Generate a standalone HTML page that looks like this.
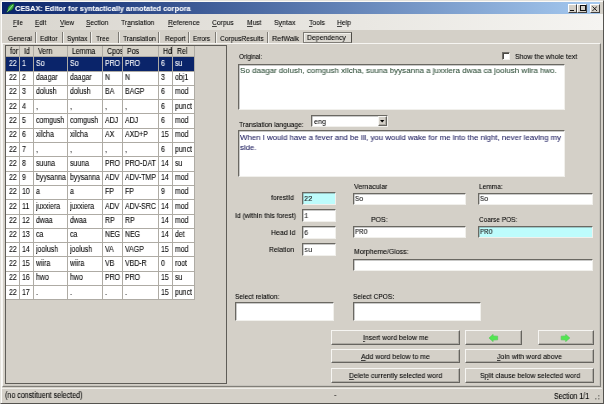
<!DOCTYPE html>
<html><head><meta charset="utf-8"><title>CESAX: Editor for syntactically annotated corpora</title>
<style>
html,body{margin:0;padding:0;}
body{width:604px;height:404px;overflow:hidden;background:#d4d0c8;position:relative;font-family:"Liberation Sans",sans-serif;font-size:7.3px;color:#000;}
div,span{position:absolute;box-sizing:border-box;white-space:nowrap;}
.t{transform-origin:0 50%;will-change:transform;-webkit-text-stroke:0.08px;}
.tb{background:#fff;border-top:1px solid #6a6862;border-left:1px solid #6a6862;box-shadow:inset 0.5px 0.5px 0 rgba(60,58,54,.55);border-bottom:1px solid #f1f0ec;border-right:1px solid #f1f0ec;}
.mono{font-family:"Liberation Mono",monospace;}
.btn{background:#d4d0c8;border-top:1px solid #f6f5f2;border-left:1px solid #f6f5f2;border-right:1px solid #66645f;border-bottom:1px solid #66645f;box-shadow:inset -1px -1px 0 #aeaba4;}
.cell{line-height:14px;height:14px;overflow:hidden;transform-origin:0 50%;transform:scaleX(.85);font-size:8.2px;will-change:transform;-webkit-text-stroke:0.08px;}
u{text-decoration:underline;text-decoration-thickness:0.6px;text-underline-offset:0.5px;text-decoration-color:rgba(0,0,0,.7);}
</style></head><body>

<div style="left:0;top:0;width:604px;height:404px;border:1px solid #e4e2dc;border-right-color:#55534f;border-bottom:1.6px solid #55534f;box-shadow:inset 1px 1px 0 #fbfaf8;"></div>
<div style="left:2.3px;top:2.3px;width:598px;height:11.3px;background:linear-gradient(90deg,#0a246a 0%,#a6caf0 100%);"></div>
<svg style="position:absolute;left:5px;top:3px" width="10" height="11" viewBox="0 0 10 11"><path d="M1.5 9.6 L3 7.2 C2.2 4.6 4.6 1.4 9 0.6 C9.8 3.8 7.8 7.4 4.2 8 Z" fill="#35a83c" stroke="#14501c" stroke-width="0.5"/><path d="M2.4 8.6 L7.8 2.2" stroke="#a8eca0" stroke-width="0.9" fill="none"/></svg>
<div style="left:567.6px;top:4px;width:9.8px;height:8.6px;background:#d4d0c8;border-top:1px solid #fff;border-left:1px solid #fff;border-right:1px solid #404040;border-bottom:1px solid #404040;"></div>
<div style="left:577.4px;top:4px;width:9.8px;height:8.6px;background:#d4d0c8;border-top:1px solid #fff;border-left:1px solid #fff;border-right:1px solid #404040;border-bottom:1px solid #404040;"></div>
<div style="left:589.8px;top:4px;width:9.8px;height:8.6px;background:#d4d0c8;border-top:1px solid #fff;border-left:1px solid #fff;border-right:1px solid #404040;border-bottom:1px solid #404040;"></div>
<div style="left:570px;top:10px;width:4px;height:1.1px;background:#111"></div>
<div style="left:579.6px;top:5.4px;width:6px;height:5.6px;border:0.8px solid #111;border-top-width:1.4px"></div>
<svg style="position:absolute;left:592px;top:5.6px" width="5.4" height="5.4" viewBox="0 0 6 6"><path d="M0.5 0.5 L5.5 5.5 M5.5 0.5 L0.5 5.5" stroke="#111" stroke-width="1.05"/></svg>
<div style="left:2px;top:13.6px;width:601px;height:16.6px;background:linear-gradient(90deg,#d9d6cf 0%,#e9e7e2 60%,#f5f4f1 100%);"></div>
<div style="left:2px;top:43px;width:599.4px;height:344px;border-top:1px solid #f6f5f2;border-left:1px solid #f6f5f2;border-right:1px solid #807e78;border-bottom:1px solid #807e78;box-shadow:inset -1px -1px 0 #c6c3bc;"></div>
<div style="left:34.699999999999996px;top:32px;width:1px;height:11.3px;background:#7d7a74"></div><div style="left:35.699999999999996px;top:32px;width:1px;height:11.3px;background:#f1f0ec"></div>
<div style="left:62.099999999999994px;top:32px;width:1px;height:11.3px;background:#7d7a74"></div><div style="left:63.099999999999994px;top:32px;width:1px;height:11.3px;background:#f1f0ec"></div>
<div style="left:90.3px;top:32px;width:1px;height:11.3px;background:#7d7a74"></div><div style="left:91.3px;top:32px;width:1px;height:11.3px;background:#f1f0ec"></div>
<div style="left:117.5px;top:32px;width:1px;height:11.3px;background:#7d7a74"></div><div style="left:118.5px;top:32px;width:1px;height:11.3px;background:#f1f0ec"></div>
<div style="left:158.3px;top:32px;width:1px;height:11.3px;background:#7d7a74"></div><div style="left:159.3px;top:32px;width:1px;height:11.3px;background:#f1f0ec"></div>
<div style="left:187.8px;top:32px;width:1px;height:11.3px;background:#7d7a74"></div><div style="left:188.8px;top:32px;width:1px;height:11.3px;background:#f1f0ec"></div>
<div style="left:214.60000000000002px;top:32px;width:1px;height:11.3px;background:#7d7a74"></div><div style="left:215.60000000000002px;top:32px;width:1px;height:11.3px;background:#f1f0ec"></div>
<div style="left:267.1px;top:32px;width:1px;height:11.3px;background:#7d7a74"></div><div style="left:268.1px;top:32px;width:1px;height:11.3px;background:#f1f0ec"></div>
<div style="left:303px;top:32px;width:48.5px;height:10.5px;background:#dcd9d2;border-top:1px solid #7c7a74;border-left:1px solid #7c7a74;border-right:1.4px solid #4e4c47;border-bottom:1px solid #807d77;box-shadow:inset 1px 1px 0 #f1f0ec;"></div>
<div style="left:5px;top:45px;width:221.7px;height:339.3px;border:1px solid #5f5d58;"></div>
<div style="left:6px;top:46px;width:188.80px;height:253.80px;background:#fff;"></div>
<div style="left:6px;top:46px;width:188.80px;height:10.70px;background:#d6d2c8;"></div>
<div style="left:6px;top:56.7px;width:188.80px;height:14.3px;background:#0a246a;"></div>
<div style="left:6px;top:56.20px;width:188.80px;height:1px;background:#aeaba4;"></div>
<div style="left:6px;top:70.50px;width:188.80px;height:1px;background:#aeaba4;"></div>
<div style="left:6px;top:84.80px;width:188.80px;height:1px;background:#aeaba4;"></div>
<div style="left:6px;top:99.10px;width:188.80px;height:1px;background:#aeaba4;"></div>
<div style="left:6px;top:113.40px;width:188.80px;height:1px;background:#aeaba4;"></div>
<div style="left:6px;top:127.70px;width:188.80px;height:1px;background:#aeaba4;"></div>
<div style="left:6px;top:142.00px;width:188.80px;height:1px;background:#aeaba4;"></div>
<div style="left:6px;top:156.30px;width:188.80px;height:1px;background:#aeaba4;"></div>
<div style="left:6px;top:170.60px;width:188.80px;height:1px;background:#aeaba4;"></div>
<div style="left:6px;top:184.90px;width:188.80px;height:1px;background:#aeaba4;"></div>
<div style="left:6px;top:199.20px;width:188.80px;height:1px;background:#aeaba4;"></div>
<div style="left:6px;top:213.50px;width:188.80px;height:1px;background:#aeaba4;"></div>
<div style="left:6px;top:227.80px;width:188.80px;height:1px;background:#aeaba4;"></div>
<div style="left:6px;top:242.10px;width:188.80px;height:1px;background:#aeaba4;"></div>
<div style="left:6px;top:256.40px;width:188.80px;height:1px;background:#aeaba4;"></div>
<div style="left:6px;top:270.70px;width:188.80px;height:1px;background:#aeaba4;"></div>
<div style="left:6px;top:285.00px;width:188.80px;height:1px;background:#aeaba4;"></div>
<div style="left:6px;top:299.30px;width:188.80px;height:1px;background:#aeaba4;"></div>
<div style="left:18.80px;top:46px;width:1px;height:253.80px;background:#aeaba4;"></div>
<div style="left:32.80px;top:46px;width:1px;height:253.80px;background:#aeaba4;"></div>
<div style="left:67.00px;top:46px;width:1px;height:253.80px;background:#aeaba4;"></div>
<div style="left:101.90px;top:46px;width:1px;height:253.80px;background:#aeaba4;"></div>
<div style="left:122.10px;top:46px;width:1px;height:253.80px;background:#aeaba4;"></div>
<div style="left:158.10px;top:46px;width:1px;height:253.80px;background:#aeaba4;"></div>
<div style="left:171.80px;top:46px;width:1px;height:253.80px;background:#aeaba4;"></div>
<div style="left:194.30px;top:46px;width:1px;height:253.80px;background:#aeaba4;"></div>
<div class="cell" style="left:10.30px;top:46.4px;width:9.65px;height:11px;line-height:11px;">for</div>
<div class="cell" style="left:23.60px;top:46.4px;width:10.47px;height:11px;line-height:11px;">Id</div>
<div class="cell" style="left:37.60px;top:46.4px;width:34.24px;height:11px;line-height:11px;">Vern</div>
<div class="cell" style="left:71.80px;top:46.4px;width:35.06px;height:11px;line-height:11px;">Lemma</div>
<div class="cell" style="left:106.70px;top:46.4px;width:17.76px;height:11px;line-height:11px;">Cpos</div>
<div class="cell" style="left:126.90px;top:46.4px;width:36.35px;height:11px;line-height:11px;">Pos</div>
<div class="cell" style="left:162.90px;top:46.4px;width:10.12px;height:11px;line-height:11px;">Hd</div>
<div class="cell" style="left:176.60px;top:46.4px;width:20.47px;height:11px;line-height:11px;">Rel</div>
<div class="cell" style="left:8.50px;top:56.70px;width:12.71px;color:#fff;">22</div>
<div class="cell" style="left:21.80px;top:56.70px;width:13.53px;color:#fff;">1</div>
<div class="cell" style="left:35.80px;top:56.70px;width:37.29px;color:#fff;">So</div>
<div class="cell" style="left:70.00px;top:56.70px;width:38.12px;color:#fff;">So</div>
<div class="cell" style="left:104.90px;top:56.70px;width:20.82px;color:#fff;">PRO</div>
<div class="cell" style="left:125.10px;top:56.70px;width:39.41px;color:#fff;">PRO</div>
<div class="cell" style="left:161.10px;top:56.70px;width:13.18px;color:#fff;">6</div>
<div class="cell" style="left:174.80px;top:56.70px;width:23.53px;color:#fff;">su</div>
<div class="cell" style="left:8.50px;top:71.00px;width:12.71px;color:#000;">22</div>
<div class="cell" style="left:21.80px;top:71.00px;width:13.53px;color:#000;">2</div>
<div class="cell" style="left:35.80px;top:71.00px;width:37.29px;color:#000;">daagar</div>
<div class="cell" style="left:70.00px;top:71.00px;width:38.12px;color:#000;">daagar</div>
<div class="cell" style="left:104.90px;top:71.00px;width:20.82px;color:#000;">N</div>
<div class="cell" style="left:125.10px;top:71.00px;width:39.41px;color:#000;">N</div>
<div class="cell" style="left:161.10px;top:71.00px;width:13.18px;color:#000;">3</div>
<div class="cell" style="left:174.80px;top:71.00px;width:23.53px;color:#000;">obj1</div>
<div class="cell" style="left:8.50px;top:85.30px;width:12.71px;color:#000;">22</div>
<div class="cell" style="left:21.80px;top:85.30px;width:13.53px;color:#000;">3</div>
<div class="cell" style="left:35.80px;top:85.30px;width:37.29px;color:#000;">dolush</div>
<div class="cell" style="left:70.00px;top:85.30px;width:38.12px;color:#000;">dolush</div>
<div class="cell" style="left:104.90px;top:85.30px;width:20.82px;color:#000;">BA</div>
<div class="cell" style="left:125.10px;top:85.30px;width:39.41px;color:#000;">BAGP</div>
<div class="cell" style="left:161.10px;top:85.30px;width:13.18px;color:#000;">6</div>
<div class="cell" style="left:174.80px;top:85.30px;width:23.53px;color:#000;">mod</div>
<div class="cell" style="left:8.50px;top:99.60px;width:12.71px;color:#000;">22</div>
<div class="cell" style="left:21.80px;top:99.60px;width:13.53px;color:#000;">4</div>
<div class="cell" style="left:35.80px;top:99.60px;width:37.29px;color:#000;">,</div>
<div class="cell" style="left:70.00px;top:99.60px;width:38.12px;color:#000;">,</div>
<div class="cell" style="left:104.90px;top:99.60px;width:20.82px;color:#000;">,</div>
<div class="cell" style="left:125.10px;top:99.60px;width:39.41px;color:#000;">,</div>
<div class="cell" style="left:161.10px;top:99.60px;width:13.18px;color:#000;">6</div>
<div class="cell" style="left:174.80px;top:99.60px;width:23.53px;color:#000;">punct</div>
<div class="cell" style="left:8.50px;top:113.90px;width:12.71px;color:#000;">22</div>
<div class="cell" style="left:21.80px;top:113.90px;width:13.53px;color:#000;">5</div>
<div class="cell" style="left:35.80px;top:113.90px;width:37.29px;color:#000;">comgush</div>
<div class="cell" style="left:70.00px;top:113.90px;width:38.12px;color:#000;">comgush</div>
<div class="cell" style="left:104.90px;top:113.90px;width:20.82px;color:#000;">ADJ</div>
<div class="cell" style="left:125.10px;top:113.90px;width:39.41px;color:#000;">ADJ</div>
<div class="cell" style="left:161.10px;top:113.90px;width:13.18px;color:#000;">6</div>
<div class="cell" style="left:174.80px;top:113.90px;width:23.53px;color:#000;">mod</div>
<div class="cell" style="left:8.50px;top:128.20px;width:12.71px;color:#000;">22</div>
<div class="cell" style="left:21.80px;top:128.20px;width:13.53px;color:#000;">6</div>
<div class="cell" style="left:35.80px;top:128.20px;width:37.29px;color:#000;">xilcha</div>
<div class="cell" style="left:70.00px;top:128.20px;width:38.12px;color:#000;">xilcha</div>
<div class="cell" style="left:104.90px;top:128.20px;width:20.82px;color:#000;">AX</div>
<div class="cell" style="left:125.10px;top:128.20px;width:39.41px;color:#000;">AXD+P</div>
<div class="cell" style="left:161.10px;top:128.20px;width:13.18px;color:#000;">15</div>
<div class="cell" style="left:174.80px;top:128.20px;width:23.53px;color:#000;">mod</div>
<div class="cell" style="left:8.50px;top:142.50px;width:12.71px;color:#000;">22</div>
<div class="cell" style="left:21.80px;top:142.50px;width:13.53px;color:#000;">7</div>
<div class="cell" style="left:35.80px;top:142.50px;width:37.29px;color:#000;">,</div>
<div class="cell" style="left:70.00px;top:142.50px;width:38.12px;color:#000;">,</div>
<div class="cell" style="left:104.90px;top:142.50px;width:20.82px;color:#000;">,</div>
<div class="cell" style="left:125.10px;top:142.50px;width:39.41px;color:#000;">,</div>
<div class="cell" style="left:161.10px;top:142.50px;width:13.18px;color:#000;">6</div>
<div class="cell" style="left:174.80px;top:142.50px;width:23.53px;color:#000;">punct</div>
<div class="cell" style="left:8.50px;top:156.80px;width:12.71px;color:#000;">22</div>
<div class="cell" style="left:21.80px;top:156.80px;width:13.53px;color:#000;">8</div>
<div class="cell" style="left:35.80px;top:156.80px;width:37.29px;color:#000;">suuna</div>
<div class="cell" style="left:70.00px;top:156.80px;width:38.12px;color:#000;">suuna</div>
<div class="cell" style="left:104.90px;top:156.80px;width:20.82px;color:#000;">PRO</div>
<div class="cell" style="left:125.10px;top:156.80px;width:39.41px;color:#000;">PRO-DAT</div>
<div class="cell" style="left:161.10px;top:156.80px;width:13.18px;color:#000;">14</div>
<div class="cell" style="left:174.80px;top:156.80px;width:23.53px;color:#000;">su</div>
<div class="cell" style="left:8.50px;top:171.10px;width:12.71px;color:#000;">22</div>
<div class="cell" style="left:21.80px;top:171.10px;width:13.53px;color:#000;">9</div>
<div class="cell" style="left:35.80px;top:171.10px;width:37.29px;color:#000;">byysanna</div>
<div class="cell" style="left:70.00px;top:171.10px;width:38.12px;color:#000;">byysanna</div>
<div class="cell" style="left:104.90px;top:171.10px;width:20.82px;color:#000;">ADV</div>
<div class="cell" style="left:125.10px;top:171.10px;width:39.41px;color:#000;">ADV-TMP</div>
<div class="cell" style="left:161.10px;top:171.10px;width:13.18px;color:#000;">14</div>
<div class="cell" style="left:174.80px;top:171.10px;width:23.53px;color:#000;">mod</div>
<div class="cell" style="left:8.50px;top:185.40px;width:12.71px;color:#000;">22</div>
<div class="cell" style="left:21.80px;top:185.40px;width:13.53px;color:#000;">10</div>
<div class="cell" style="left:35.80px;top:185.40px;width:37.29px;color:#000;">a</div>
<div class="cell" style="left:70.00px;top:185.40px;width:38.12px;color:#000;">a</div>
<div class="cell" style="left:104.90px;top:185.40px;width:20.82px;color:#000;">FP</div>
<div class="cell" style="left:125.10px;top:185.40px;width:39.41px;color:#000;">FP</div>
<div class="cell" style="left:161.10px;top:185.40px;width:13.18px;color:#000;">9</div>
<div class="cell" style="left:174.80px;top:185.40px;width:23.53px;color:#000;">mod</div>
<div class="cell" style="left:8.50px;top:199.70px;width:12.71px;color:#000;">22</div>
<div class="cell" style="left:21.80px;top:199.70px;width:13.53px;color:#000;">11</div>
<div class="cell" style="left:35.80px;top:199.70px;width:37.29px;color:#000;">juxxiera</div>
<div class="cell" style="left:70.00px;top:199.70px;width:38.12px;color:#000;">juxxiera</div>
<div class="cell" style="left:104.90px;top:199.70px;width:20.82px;color:#000;">ADV</div>
<div class="cell" style="left:125.10px;top:199.70px;width:39.41px;color:#000;">ADV-SRC</div>
<div class="cell" style="left:161.10px;top:199.70px;width:13.18px;color:#000;">14</div>
<div class="cell" style="left:174.80px;top:199.70px;width:23.53px;color:#000;">mod</div>
<div class="cell" style="left:8.50px;top:214.00px;width:12.71px;color:#000;">22</div>
<div class="cell" style="left:21.80px;top:214.00px;width:13.53px;color:#000;">12</div>
<div class="cell" style="left:35.80px;top:214.00px;width:37.29px;color:#000;">dwaa</div>
<div class="cell" style="left:70.00px;top:214.00px;width:38.12px;color:#000;">dwaa</div>
<div class="cell" style="left:104.90px;top:214.00px;width:20.82px;color:#000;">RP</div>
<div class="cell" style="left:125.10px;top:214.00px;width:39.41px;color:#000;">RP</div>
<div class="cell" style="left:161.10px;top:214.00px;width:13.18px;color:#000;">14</div>
<div class="cell" style="left:174.80px;top:214.00px;width:23.53px;color:#000;">mod</div>
<div class="cell" style="left:8.50px;top:228.30px;width:12.71px;color:#000;">22</div>
<div class="cell" style="left:21.80px;top:228.30px;width:13.53px;color:#000;">13</div>
<div class="cell" style="left:35.80px;top:228.30px;width:37.29px;color:#000;">ca</div>
<div class="cell" style="left:70.00px;top:228.30px;width:38.12px;color:#000;">ca</div>
<div class="cell" style="left:104.90px;top:228.30px;width:20.82px;color:#000;">NEG</div>
<div class="cell" style="left:125.10px;top:228.30px;width:39.41px;color:#000;">NEG</div>
<div class="cell" style="left:161.10px;top:228.30px;width:13.18px;color:#000;">14</div>
<div class="cell" style="left:174.80px;top:228.30px;width:23.53px;color:#000;">det</div>
<div class="cell" style="left:8.50px;top:242.60px;width:12.71px;color:#000;">22</div>
<div class="cell" style="left:21.80px;top:242.60px;width:13.53px;color:#000;">14</div>
<div class="cell" style="left:35.80px;top:242.60px;width:37.29px;color:#000;">joolush</div>
<div class="cell" style="left:70.00px;top:242.60px;width:38.12px;color:#000;">joolush</div>
<div class="cell" style="left:104.90px;top:242.60px;width:20.82px;color:#000;">VA</div>
<div class="cell" style="left:125.10px;top:242.60px;width:39.41px;color:#000;">VAGP</div>
<div class="cell" style="left:161.10px;top:242.60px;width:13.18px;color:#000;">15</div>
<div class="cell" style="left:174.80px;top:242.60px;width:23.53px;color:#000;">mod</div>
<div class="cell" style="left:8.50px;top:256.90px;width:12.71px;color:#000;">22</div>
<div class="cell" style="left:21.80px;top:256.90px;width:13.53px;color:#000;">15</div>
<div class="cell" style="left:35.80px;top:256.90px;width:37.29px;color:#000;">wiira</div>
<div class="cell" style="left:70.00px;top:256.90px;width:38.12px;color:#000;">wiira</div>
<div class="cell" style="left:104.90px;top:256.90px;width:20.82px;color:#000;">VB</div>
<div class="cell" style="left:125.10px;top:256.90px;width:39.41px;color:#000;">VBD-R</div>
<div class="cell" style="left:161.10px;top:256.90px;width:13.18px;color:#000;">0</div>
<div class="cell" style="left:174.80px;top:256.90px;width:23.53px;color:#000;">root</div>
<div class="cell" style="left:8.50px;top:271.20px;width:12.71px;color:#000;">22</div>
<div class="cell" style="left:21.80px;top:271.20px;width:13.53px;color:#000;">16</div>
<div class="cell" style="left:35.80px;top:271.20px;width:37.29px;color:#000;">hwo</div>
<div class="cell" style="left:70.00px;top:271.20px;width:38.12px;color:#000;">hwo</div>
<div class="cell" style="left:104.90px;top:271.20px;width:20.82px;color:#000;">PRO</div>
<div class="cell" style="left:125.10px;top:271.20px;width:39.41px;color:#000;">PRO</div>
<div class="cell" style="left:161.10px;top:271.20px;width:13.18px;color:#000;">15</div>
<div class="cell" style="left:174.80px;top:271.20px;width:23.53px;color:#000;">su</div>
<div class="cell" style="left:8.50px;top:285.50px;width:12.71px;color:#000;">22</div>
<div class="cell" style="left:21.80px;top:285.50px;width:13.53px;color:#000;">17</div>
<div class="cell" style="left:35.80px;top:285.50px;width:37.29px;color:#000;">.</div>
<div class="cell" style="left:70.00px;top:285.50px;width:38.12px;color:#000;">.</div>
<div class="cell" style="left:104.90px;top:285.50px;width:20.82px;color:#000;">.</div>
<div class="cell" style="left:125.10px;top:285.50px;width:39.41px;color:#000;">.</div>
<div class="cell" style="left:161.10px;top:285.50px;width:13.18px;color:#000;">15</div>
<div class="cell" style="left:174.80px;top:285.50px;width:23.53px;color:#000;">punct</div>
<div style="left:501.5px;top:51.5px;width:8.7px;height:8.7px;background:#fff;border:1px solid #716f69;border-right-color:#f1f0ec;border-bottom-color:#f1f0ec;box-shadow:inset 1px 1px 0 #4a4843;"></div>
<div class="tb" style="left:237.9px;top:63.8px;width:327.3px;height:46.2px;background:#fff;"></div>
<div class="tb" style="left:311px;top:115.1px;width:76.6px;height:12.3px;background:#fff;"></div>
<div class="btn" style="left:378.3px;top:116.4px;width:8.3px;height:9.7px;"></div>
<svg style="position:absolute;left:380.3px;top:120px" width="4.4" height="2.6" viewBox="0 0 5 3"><path d="M0 0 L5 0 L2.5 3 Z" fill="#000"/></svg>
<div class="tb" style="left:237.9px;top:130.4px;width:327.3px;height:46.9px;background:#fff;"></div>
<div class="tb" style="left:302.2px;top:192px;width:33.5px;height:12.8px;background:#bdfcfc;"></div>
<div class="tb" style="left:302.2px;top:209.1px;width:33.5px;height:12.7px;background:#fff;"></div>
<div class="tb" style="left:302.2px;top:226.2px;width:33.5px;height:12.6px;background:#fff;"></div>
<div class="tb" style="left:302.2px;top:243.2px;width:33.5px;height:12.6px;background:#fff;"></div>
<div class="tb" style="left:353.3px;top:192.8px;width:113.0px;height:12.4px;background:#fff;"></div>
<div class="tb" style="left:477.8px;top:192.8px;width:114.8px;height:12.4px;background:#fff;"></div>
<div class="tb" style="left:353.3px;top:225.8px;width:113.0px;height:12.6px;background:#fff;"></div>
<div class="tb" style="left:477.8px;top:225.8px;width:114.8px;height:12.6px;background:#bdfcfc;"></div>
<div class="tb" style="left:353.3px;top:258.8px;width:239.3px;height:12.6px;background:#fff;"></div>
<div class="tb" style="left:234.9px;top:302.3px;width:99.1px;height:18.3px;background:#fff;"></div>
<div class="tb" style="left:353.2px;top:302.3px;width:128.0px;height:18.3px;background:#fff;"></div>
<div class="btn" style="left:330.7px;top:329.8px;width:129.4px;height:15.0px;"></div>
<div class="btn" style="left:330.7px;top:348.5px;width:129.4px;height:14.9px;"></div>
<div class="btn" style="left:330.7px;top:367.5px;width:129.4px;height:15.3px;"></div>
<div class="btn" style="left:465.4px;top:329.8px;width:56.4px;height:15.0px;"></div>
<div class="btn" style="left:537.5px;top:329.8px;width:56.9px;height:15.0px;"></div>
<div class="btn" style="left:465.4px;top:348.5px;width:129.1px;height:14.9px;"></div>
<div class="btn" style="left:465.4px;top:367.5px;width:129.1px;height:15.3px;"></div>
<svg style="position:absolute;left:488.4px;top:333.8px;filter:blur(0.5px)" width="10.8" height="8" viewBox="0 0 11 9"><path d="M0.5 4.5 L5.2 0.4 L5.2 2.2 L10.3 2.4 L10.3 6.6 L5.2 6.8 L5.2 8.6 Z" fill="#52e652" stroke="#58c858" stroke-width="0.7" stroke-linejoin="round"/></svg>
<svg style="position:absolute;left:560px;top:333.8px;filter:blur(0.5px)" width="10.8" height="8" viewBox="0 0 11 9"><path d="M10.5 4.5 L5.8 0.4 L5.8 2.2 L0.7 2.4 L0.7 6.6 L5.8 6.8 L5.8 8.6 Z" fill="#52e652" stroke="#58c858" stroke-width="0.7" stroke-linejoin="round"/></svg>
<div style="left:2px;top:388px;width:600px;height:1px;background:#efeeea"></div>
<svg style="position:absolute;left:592px;top:392px" width="9" height="9" viewBox="0 0 9 9"><g fill="#8a8882"><rect x="6" y="6" width="1.5" height="1.5"/><rect x="3" y="6" width="1.5" height="1.5"/><rect x="6" y="3" width="1.5" height="1.5"/></g></svg>
<div class="t " id="t0" style="left:15.0px;top:3.60px;line-height:10px;height:10px;font-size:7.8px;color:#fff;font-weight:bold;transform:scaleX(0.942);">CESAX: Editor for syntactically annotated corpora</div>
<div class="t " id="t1" style="left:12.9px;top:18.40px;line-height:10px;height:10px;font-size:8.0px;transform:scaleX(0.767);"><u>F</u>ile</div>
<div class="t " id="t2" style="left:35.4px;top:18.40px;line-height:10px;height:10px;font-size:8.0px;transform:scaleX(0.819);"><u>E</u>dit</div>
<div class="t " id="t3" style="left:59.6px;top:18.40px;line-height:10px;height:10px;font-size:8.0px;transform:scaleX(0.807);"><u>V</u>iew</div>
<div class="t " id="t4" style="left:86px;top:18.40px;line-height:10px;height:10px;font-size:8.0px;transform:scaleX(0.835);"><u>S</u>ection</div>
<div class="t " id="t5" style="left:121.3px;top:18.40px;line-height:10px;height:10px;font-size:8.0px;transform:scaleX(0.850);">Tr<u>a</u>nslation</div>
<div class="t " id="t6" style="left:168px;top:18.40px;line-height:10px;height:10px;font-size:8.0px;transform:scaleX(0.861);"><u>R</u>eference</div>
<div class="t " id="t7" style="left:212.4px;top:18.40px;line-height:10px;height:10px;font-size:8.0px;transform:scaleX(0.841);"><u>C</u>orpus</div>
<div class="t " id="t8" style="left:246.9px;top:18.40px;line-height:10px;height:10px;font-size:8.0px;transform:scaleX(0.836);"><u>M</u>ust</div>
<div class="t " id="t9" style="left:274.4px;top:18.40px;line-height:10px;height:10px;font-size:8.0px;transform:scaleX(0.879);">S<u>y</u>ntax</div>
<div class="t " id="t10" style="left:308.8px;top:18.40px;line-height:10px;height:10px;font-size:8.0px;transform:scaleX(0.851);"><u>T</u>ools</div>
<div class="t " id="t11" style="left:336.7px;top:18.40px;line-height:10px;height:10px;font-size:8.0px;transform:scaleX(0.850);"><u>H</u>elp</div>
<div class="t " id="t12" style="left:7.9px;top:33.70px;line-height:10px;height:10px;font-size:8.0px;transform:scaleX(0.840);">General</div>
<div class="t " id="t13" style="left:39.7px;top:33.70px;line-height:10px;height:10px;font-size:8.0px;transform:scaleX(0.837);">Editor</div>
<div class="t " id="t14" style="left:67px;top:33.70px;line-height:10px;height:10px;font-size:8.0px;transform:scaleX(0.834);">Syntax</div>
<div class="t " id="t15" style="left:96px;top:33.70px;line-height:10px;height:10px;font-size:8.0px;transform:scaleX(0.823);">Tree</div>
<div class="t " id="t16" style="left:123.3px;top:33.70px;line-height:10px;height:10px;font-size:8.0px;transform:scaleX(0.835);">Translation</div>
<div class="t " id="t17" style="left:164.6px;top:33.70px;line-height:10px;height:10px;font-size:8.0px;transform:scaleX(0.854);">Report</div>
<div class="t " id="t18" style="left:192.9px;top:33.70px;line-height:10px;height:10px;font-size:8.0px;transform:scaleX(0.785);">Errors</div>
<div class="t " id="t19" style="left:220.1px;top:33.70px;line-height:10px;height:10px;font-size:8.0px;transform:scaleX(0.833);">CorpusResults</div>
<div class="t " id="t20" style="left:272px;top:33.70px;line-height:10px;height:10px;font-size:8.0px;transform:scaleX(0.902);">RefWalk</div>
<div class="t " id="t21" style="left:307.2px;top:32.80px;line-height:10px;height:10px;font-size:8.0px;transform:scaleX(0.864);">Dependency</div>
<div class="t " id="t22" style="left:238.6px;top:52.10px;line-height:10px;height:10px;font-size:8.0px;transform:scaleX(0.779);">Original:</div>
<div class="t " id="t23" style="left:514.8px;top:51.60px;line-height:10px;height:10px;font-size:8.0px;transform:scaleX(0.867);">Show the whole text</div>
<div class="t " id="t24" style="left:240.3px;top:66.30px;line-height:10px;height:10px;font-size:8.1px;color:#2c4c36;transform:scaleX(0.982);">So daagar dolush, comgush xilcha, suuna byysanna a juxxiera dwaa ca joolush wiira hwo.</div>
<div class="t " id="t25" style="left:239px;top:119.80px;line-height:10px;height:10px;font-size:8.0px;transform:scaleX(0.844);">Translation language:</div>
<div class="t " id="t26" style="left:313.7px;top:116.80px;line-height:10px;height:10px;font-size:8.0px;transform:scaleX(0.891);">eng</div>
<div class="t " id="t27" style="left:240.2px;top:133.10px;line-height:10px;height:10px;font-size:8.1px;color:#222262;transform:scaleX(0.967);">When I would have a fever and be ill, you would wake for me into the night, never leaving my</div>
<div class="t " id="t28" style="left:240.2px;top:142.80px;line-height:10px;height:10px;font-size:8.1px;color:#222262;transform:scaleX(0.965);">side.</div>
<div class="t " id="t29" style="left:271.2px;top:193.20px;line-height:10px;height:10px;font-size:8.0px;transform:scaleX(0.858);">forestId</div>
<div class="t " id="t30" style="left:235.3px;top:210.50px;line-height:10px;height:10px;font-size:8.0px;transform:scaleX(0.851);">Id (within this forest)</div>
<div class="t " id="t31" style="left:271.2px;top:227.50px;line-height:10px;height:10px;font-size:8.0px;transform:scaleX(0.870);">Head Id</div>
<div class="t " id="t32" style="left:269px;top:244.60px;line-height:10px;height:10px;font-size:8.0px;transform:scaleX(0.855);">Relation</div>
<div class="t " id="t33" style="left:353.7px;top:181.80px;line-height:10px;height:10px;font-size:8.0px;transform:scaleX(0.873);">Vernacular</div>
<div class="t " id="t34" style="left:479.2px;top:181.80px;line-height:10px;height:10px;font-size:8.0px;transform:scaleX(0.820);">Lemma:</div>
<div class="t " id="t35" style="left:371px;top:214.70px;line-height:10px;height:10px;font-size:8.0px;transform:scaleX(0.868);">POS:</div>
<div class="t " id="t36" style="left:479.2px;top:214.70px;line-height:10px;height:10px;font-size:8.0px;transform:scaleX(0.812);">Coarse POS:</div>
<div class="t " id="t37" style="left:353.7px;top:246.90px;line-height:10px;height:10px;font-size:8.0px;transform:scaleX(0.862);">Morpheme/Gloss:</div>
<div class="t " id="t38" style="left:235.2px;top:291.50px;line-height:10px;height:10px;font-size:8.0px;transform:scaleX(0.837);">Select relation:</div>
<div class="t " id="t39" style="left:353.3px;top:291.50px;line-height:10px;height:10px;font-size:8.0px;transform:scaleX(0.835);">Select CPOS:</div>
<div class="t " id="t40" style="left:363.1px;top:333.30px;line-height:10px;height:10px;font-size:8.0px;transform:scaleX(0.860);"><u>I</u>nsert word below me</div>
<div class="t " id="t41" style="left:361px;top:352.00px;line-height:10px;height:10px;font-size:8.0px;transform:scaleX(0.869);"><u>A</u>dd word below to me</div>
<div class="t " id="t42" style="left:348.9px;top:371.00px;line-height:10px;height:10px;font-size:8.0px;transform:scaleX(0.866);"><u>D</u>elete currently selected word</div>
<div class="t " id="t43" style="left:497.4px;top:352.00px;line-height:10px;height:10px;font-size:8.0px;transform:scaleX(0.870);"><u>J</u>oin with word above</div>
<div class="t " id="t44" style="left:480.2px;top:371.00px;line-height:10px;height:10px;font-size:8.0px;transform:scaleX(0.866);">S<u>p</u>lit clause below selected word</div>
<div class="t " id="t45" style="left:5px;top:390.30px;line-height:10px;height:10px;font-size:8.3px;transform:scaleX(0.857);">(no constituent selected)</div>
<div class="t " id="t46" style="left:333.5px;top:390.40px;line-height:10px;height:10px;font-size:8.0px;transform:scaleX(0.936);">-</div>
<div class="t " id="t47" style="left:553.5px;top:390.60px;line-height:10px;height:10px;font-size:8.3px;transform:scaleX(0.845);">Section 1/1</div>
<div class="t mono" id="t48" style="left:304.2px;top:193.60px;line-height:10px;height:10px;font-size:8.1px;color:#222;transform:scaleX(0.870);">22</div>
<div class="t mono" id="t49" style="left:304.2px;top:210.60px;line-height:10px;height:10px;font-size:8.1px;color:#222;transform:scaleX(0.870);">1</div>
<div class="t mono" id="t50" style="left:304.2px;top:227.60px;line-height:10px;height:10px;font-size:8.1px;color:#222;transform:scaleX(0.870);">6</div>
<div class="t mono" id="t51" style="left:304.2px;top:244.60px;line-height:10px;height:10px;font-size:8.1px;color:#222;transform:scaleX(0.870);">su</div>
<div class="t mono" id="t52" style="left:355.2px;top:194.30px;line-height:10px;height:10px;font-size:8.1px;color:#222;transform:scaleX(0.870);">So</div>
<div class="t mono" id="t53" style="left:479.7px;top:194.30px;line-height:10px;height:10px;font-size:8.1px;color:#222;transform:scaleX(0.870);">So</div>
<div class="t mono" id="t54" style="left:355.2px;top:227.40px;line-height:10px;height:10px;font-size:8.1px;color:#222;transform:scaleX(0.870);">PRO</div>
<div class="t mono" id="t55" style="left:479.7px;top:227.40px;line-height:10px;height:10px;font-size:8.1px;color:#222;transform:scaleX(0.870);">PRO</div>
</body></html>
